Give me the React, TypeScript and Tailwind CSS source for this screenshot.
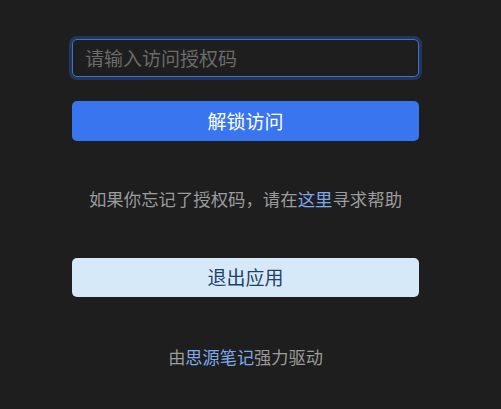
import React from "react";

export default function App() {
  return (
    <div
      className="w-[501px] h-[409px] bg-[#1e1e1e] flex flex-col pl-[72px] pt-[39px]"
      style={{ fontFamily: '"Noto Sans CJK SC", "Noto Sans", sans-serif' }}
    >
      <div className="w-[347px] flex flex-col">
        <div className="h-[38px] rounded-[5px] border border-[#3b72d9] bg-[#1e1e1e] ring-[3px] ring-[#233655] flex items-center px-[12px] pb-[2px]">
          <span className="text-[19px] text-[#6b6b6b] leading-none">请输入访问授权码</span>
        </div>
        <button className="mt-[24px] h-[40px] rounded-[5px] bg-[#3875ee] text-white text-[19px] flex items-center justify-center">
          解锁访问
        </button>
        <div className="mt-[47px] text-center text-[17.4px] text-[#9b9b9b] leading-[22px]">
          如果你忘记了授权码，请在<span className="text-[#7fa9ea]">这里</span>寻求帮助
        </div>
        <button className="mt-[48px] h-[39px] rounded-[5px] bg-[#d6e9f9] text-[#1f4166] text-[19px] flex items-center justify-center">
          退出应用
        </button>
        <div className="mt-[49px] text-center text-[17.2px] text-[#9b9b9b] leading-[22px]">
          由<span className="text-[#7fa9ea]">思源笔记</span>强力驱动
        </div>
      </div>
    </div>
  );
}
